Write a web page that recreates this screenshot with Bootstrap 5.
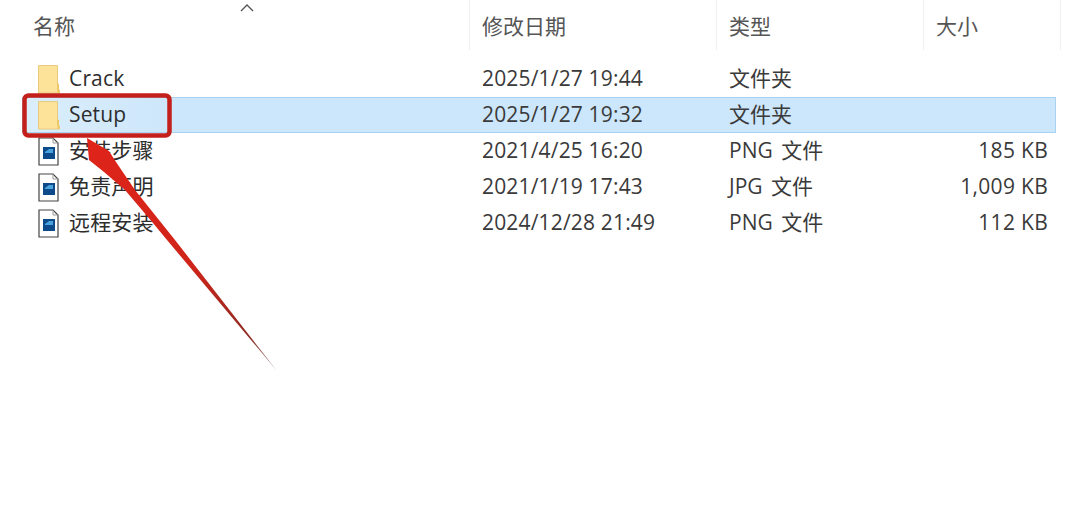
<!DOCTYPE html>
<html lang="zh"><head><meta charset="utf-8">
<link href="https://cdn.jsdelivr.net/npm/bootstrap@5.3.0/dist/css/bootstrap.min.css" rel="stylesheet">
<style>
html,body{height:527px;overflow:hidden;background:#fff}
.explorer{position:relative;width:1080px;height:527px;font-family:"Open Sans","Noto Sans CJK SC",sans-serif;font-size:21px;color:#3a3a3a}
.head-row{display:grid;grid-template-columns:470px 247px 207px 1fr;height:50px;color:#555}
.head-cell{display:flex;align-items:center;padding:3px 0 0 12px;border-right:1px solid #eef0f2;position:relative}
.head-cell:first-child{padding-left:33px}
.head-cell:last-child{margin-right:19px}
.sort-mark{position:absolute;left:240px;top:3px}
.file-list{padding-top:11px}
.file-row{display:grid;grid-template-columns:448px 247px 207px 1fr;height:36px;margin-left:22px;width:1034px;align-items:center;white-space:nowrap}
.file-row.picked{background:linear-gradient(to right,#dbeefb,#cce6fb 160px);box-shadow:inset 0 0 0 1px #a9d2f1}
.name-cell{display:flex;align-items:center;gap:9px;padding-left:16px;color:#2d2d2d;letter-spacing:.15px}
.date-cell{letter-spacing:.17px}
.date-cell,.type-cell{padding-left:12px}
.type-cell{word-spacing:3px}
.size-cell{text-align:right;padding-right:8px;letter-spacing:.3px}
.annot{position:absolute;left:0;top:0;pointer-events:none}
</style></head><body>
<div class="explorer">
 <div class="head-row">
  <div class="head-cell">名称<svg class="sort-mark" width="14" height="9" viewBox="0 0 14 9"><path d="M1 8 7 2l6 6" fill="none" stroke="#555" stroke-width="1.4"/></svg></div>
  <div class="head-cell">修改日期</div><div class="head-cell">类型</div><div class="head-cell">大小</div>
 </div>
 <div class="file-list">
  <div class="file-row"><div class="name-cell"><svg width="22" height="29" viewBox="0 0 22 29"><path d="M.5.500h19v24l2 .5v3H.5z" fill="#fde39a" stroke="#e8cb7c"/><path d="M19.500 18l1.500 1v9h-1.500z" fill="#f0c763"/></svg>Crack</div><div class="date-cell">2025/1/27 19:44</div><div class="type-cell">文件夹</div><div class="size-cell"></div></div>
  <div class="file-row picked"><div class="name-cell"><svg width="22" height="29" viewBox="0 0 22 29"><path d="M.5.500h19v24l2 .5v3H.5z" fill="#fde39a" stroke="#e8cb7c"/><path d="M19.500 18l1.500 1v9h-1.500z" fill="#f0c763"/></svg>Setup</div><div class="date-cell">2025/1/27 19:32</div><div class="type-cell">文件夹</div><div class="size-cell"></div></div>
  <div class="file-row"><div class="name-cell"><svg width="22" height="29" viewBox="0 0 22 29"><path d="M1 1h14l5 5v22H1z" fill="#fff" stroke="#444" stroke-width="1.200"/><path d="M15 1v5h5" fill="none" stroke="#999"/><rect x="5" y="10" width="12" height="12" fill="#0c4a8a"/><path d="M7 15l4-3h4v4H7z" fill="#4aa3dc"/></svg>安装步骤</div><div class="date-cell">2021/4/25 16:20</div><div class="type-cell">PNG 文件</div><div class="size-cell">185 KB</div></div>
  <div class="file-row"><div class="name-cell"><svg width="22" height="29" viewBox="0 0 22 29"><path d="M1 1h14l5 5v22H1z" fill="#fff" stroke="#444" stroke-width="1.200"/><path d="M15 1v5h5" fill="none" stroke="#999"/><rect x="5" y="10" width="12" height="12" fill="#0c4a8a"/><path d="M7 15l4-3h4v4H7z" fill="#4aa3dc"/></svg>免责声明</div><div class="date-cell">2021/1/19 17:43</div><div class="type-cell">JPG 文件</div><div class="size-cell">1,009 KB</div></div>
  <div class="file-row"><div class="name-cell"><svg width="22" height="29" viewBox="0 0 22 29"><path d="M1 1h14l5 5v22H1z" fill="#fff" stroke="#444" stroke-width="1.200"/><path d="M15 1v5h5" fill="none" stroke="#999"/><rect x="5" y="10" width="12" height="12" fill="#0c4a8a"/><path d="M7 15l4-3h4v4H7z" fill="#4aa3dc"/></svg>远程安装</div><div class="date-cell">2024/12/28 21:49</div><div class="type-cell">PNG 文件</div><div class="size-cell">112 KB</div></div>
 </div>
 <svg class="annot" width="1080" height="527" viewBox="0 0 1080 527">
  <defs><linearGradient id="ag" gradientUnits="userSpaceOnUse" x1="87" y1="138" x2="277" y2="371"><stop offset="0" stop-color="#e0241a"/><stop offset=".55" stop-color="#cf2419"/><stop offset=".85" stop-color="#8e2a22"/><stop offset="1" stop-color="#9a8a88"/></linearGradient></defs>
  <rect x="24.500" y="95.500" width="145" height="40" rx="4" fill="none" stroke="#c3201c" stroke-width="4.500"/>
  <path d="M87 138l22 13 7 11 19 28 40 50 102 131-110-131-14-17-28-33-21-18-15-12z" fill="url(#ag)"/>
 </svg>
</div>
<script src="https://cdn.jsdelivr.net/npm/bootstrap@5.3.0/dist/js/bootstrap.bundle.min.js"></script>
</body></html>
